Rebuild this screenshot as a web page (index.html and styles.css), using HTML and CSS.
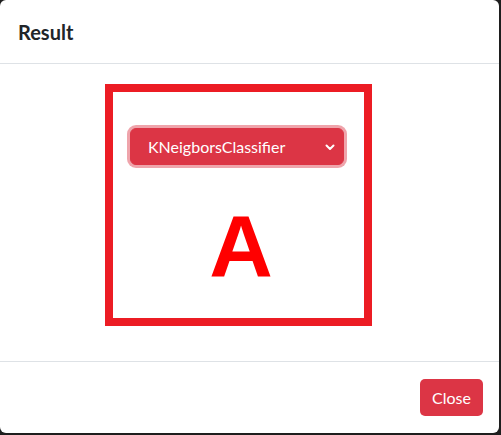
FILE: index.html
```html
<!DOCTYPE html>
<html lang="en">
<head>
<meta charset="utf-8">
<title>Result</title>
<link rel="stylesheet" href="styles.css">
</head>
<body>
<div class="modal">
  <div class="modal-header">
    <h5 class="modal-title">Result</h5>
  </div>
  <div class="modal-body">
    <div class="result-box">
      <select class="model-select">
        <option>KNeigborsClassifier</option>
      </select>
      <div class="grade">A</div>
    </div>
  </div>
  <div class="modal-footer">
    <button class="btn-close-modal" type="button">Close</button>
  </div>
</div>
</body>
</html>
```
FILE: styles.css
```css
html, body {
  margin: 0;
  padding: 0;
}
body {
  background: #1e1e1e;
  width: 501px;
  height: 435px;
  overflow: hidden;
  font-family: Lato, "Open Sans", sans-serif;
  color: #212529;
}
.modal {
  width: 499px;
  height: 433px;
  background: #fff;
  border-radius: 6px;
  display: flex;
  flex-direction: column;
  box-sizing: border-box;
}
.modal-header {
  height: 64px;
  box-sizing: border-box;
  border-bottom: 1px solid #dee2e6;
  display: flex;
  align-items: center;
  padding: 0 18px;
}
.modal-title {
  margin: 0;
  font-size: 20px;
  font-weight: 700;
  line-height: 1.2;
}
.modal-body {
  flex: 1;
  padding: 20px 0 0 105px;
}
.result-box {
  width: 267px;
  height: 242px;
  box-sizing: border-box;
  border: 8px solid #ec1c24;
  padding: 36px 0 0 17px;
}
.model-select {
  display: block;
  width: 214px;
  height: 37px;
  margin: 0;
  padding: 0 30px 0 17px;
  border: 1px solid #dc3545;
  border-radius: 6px;
  background-color: #dc3545;
  background-image: url("data:image/svg+xml,%3Csvg xmlns='http://www.w3.org/2000/svg' width='10' height='8' viewBox='0 0 10 8'%3E%3Cpath d='M1.5 2.5 L5 6 L8.5 2.5' fill='none' stroke='white' stroke-width='2' stroke-linecap='round' stroke-linejoin='round'/%3E%3C/svg%3E");
  background-repeat: no-repeat;
  background-position: right 8px center;
  background-size: 10px 8px;
  color: #fff;
  font-family: Lato, "Open Sans", sans-serif;
  font-size: 16px;
  appearance: none;
  -webkit-appearance: none;
  box-shadow: 0 0 0 3px rgba(220, 53, 69, 0.45);
  outline: none;
}
.grade {
  margin-top: 37px;
  width: 222px;
  text-align: center;
  font-family: "Liberation Sans", Arial, sans-serif;
  font-weight: 700;
  font-size: 88px;
  line-height: 88px;
  color: #ff0000;
}
.modal-footer {
  height: 72px;
  box-sizing: border-box;
  border-top: 1px solid #dee2e6;
  display: flex;
  align-items: center;
  justify-content: flex-end;
  padding: 0 16px;
}
.btn-close-modal {
  height: 37px;
  padding: 0 12px;
  border: none;
  border-radius: 5px;
  background: #dc3545;
  color: #fff;
  font-family: Lato, "Open Sans", sans-serif;
  font-size: 16px;
  cursor: pointer;
}
```
